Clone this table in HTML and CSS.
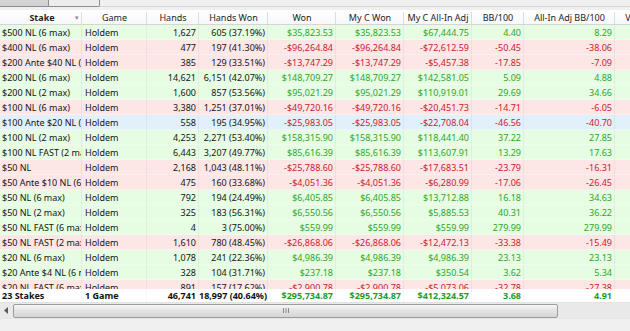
FILE: index.html
```html
<!DOCTYPE html>
<html>
<head>
<meta charset="utf-8">
<link rel="stylesheet" href="styles.css">
</head>
<body>
<div class="tabs">
  <div class="tab tab-stats">Stats</div>
  <div class="tab tab-adv">Advanced</div>
  <div class="tab-rest"></div>
</div>
<div class="grid">
  <div class="row head">
    <span class="stake-h"><b>Stake</b><i class="sort">&#9662;</i></span>
    <span>Game</span><span>Hands</span><span>Hands Won</span><span>Won</span><span>My C Won</span><span>My C All-In Adj</span><span>BB/100</span><span>All-In Adj BB/100</span><span>VPIP</span>
  </div>
  <div class="body">
    <div class="row g"><span class="l">$500 NL (6 max)</span><span class="l">Holdem</span><span>1,627</span><span>605 (37.19%)</span><span class="m">$35,823.53</span><span class="m">$35,823.53</span><span class="m">$67,444.75</span><span class="m">4.40</span><span class="m">8.29</span><span></span></div>
    <div class="row r"><span class="l">$400 NL (6 max)</span><span class="l">Holdem</span><span>477</span><span>197 (41.30%)</span><span class="m">-$96,264.84</span><span class="m">-$96,264.84</span><span class="m">-$72,612.59</span><span class="m">-50.45</span><span class="m">-38.06</span><span></span></div>
    <div class="row r"><span class="l">$200 Ante $40 NL (6 max)</span><span class="l">Holdem</span><span>385</span><span>129 (33.51%)</span><span class="m">-$13,747.29</span><span class="m">-$13,747.29</span><span class="m">-$5,457.38</span><span class="m">-17.85</span><span class="m">-7.09</span><span></span></div>
    <div class="row g"><span class="l">$200 NL (6 max)</span><span class="l">Holdem</span><span>14,621</span><span>6,151 (42.07%)</span><span class="m">$148,709.27</span><span class="m">$148,709.27</span><span class="m">$142,581.05</span><span class="m">5.09</span><span class="m">4.88</span><span></span></div>
    <div class="row g"><span class="l">$200 NL (2 max)</span><span class="l">Holdem</span><span>1,600</span><span>857 (53.56%)</span><span class="m">$95,021.29</span><span class="m">$95,021.29</span><span class="m">$110,919.01</span><span class="m">29.69</span><span class="m">34.66</span><span></span></div>
    <div class="row r"><span class="l">$100 NL (6 max)</span><span class="l">Holdem</span><span>3,380</span><span>1,251 (37.01%)</span><span class="m">-$49,720.16</span><span class="m">-$49,720.16</span><span class="m">-$20,451.73</span><span class="m">-14.71</span><span class="m">-6.05</span><span></span></div>
    <div class="row b"><span class="l">$100 Ante $20 NL (6 max)</span><span class="l">Holdem</span><span>558</span><span>195 (34.95%)</span><span class="m">-$25,983.05</span><span class="m">-$25,983.05</span><span class="m">-$22,708.04</span><span class="m">-46.56</span><span class="m">-40.70</span><span></span></div>
    <div class="row g"><span class="l">$100 NL (2 max)</span><span class="l">Holdem</span><span>4,253</span><span>2,271 (53.40%)</span><span class="m">$158,315.90</span><span class="m">$158,315.90</span><span class="m">$118,441.40</span><span class="m">37.22</span><span class="m">27.85</span><span></span></div>
    <div class="row g"><span class="l">$100 NL FAST (2 max)</span><span class="l">Holdem</span><span>6,443</span><span>3,207 (49.77%)</span><span class="m">$85,616.39</span><span class="m">$85,616.39</span><span class="m">$113,607.91</span><span class="m">13.29</span><span class="m">17.63</span><span></span></div>
    <div class="row r"><span class="l">$50 NL</span><span class="l">Holdem</span><span>2,168</span><span>1,043 (48.11%)</span><span class="m">-$25,788.60</span><span class="m">-$25,788.60</span><span class="m">-$17,683.51</span><span class="m">-23.79</span><span class="m">-16.31</span><span></span></div>
    <div class="row r"><span class="l">$50 Ante $10 NL (6 max)</span><span class="l">Holdem</span><span>475</span><span>160 (33.68%)</span><span class="m">-$4,051.36</span><span class="m">-$4,051.36</span><span class="m">-$6,280.99</span><span class="m">-17.06</span><span class="m">-26.45</span><span></span></div>
    <div class="row g"><span class="l">$50 NL (6 max)</span><span class="l">Holdem</span><span>792</span><span>194 (24.49%)</span><span class="m">$6,405.85</span><span class="m">$6,405.85</span><span class="m">$13,712.88</span><span class="m">16.18</span><span class="m">34.63</span><span></span></div>
    <div class="row g"><span class="l">$50 NL (2 max)</span><span class="l">Holdem</span><span>325</span><span>183 (56.31%)</span><span class="m">$6,550.56</span><span class="m">$6,550.56</span><span class="m">$5,885.53</span><span class="m">40.31</span><span class="m">36.22</span><span></span></div>
    <div class="row g"><span class="l">$50 NL FAST (6 max)</span><span class="l">Holdem</span><span>4</span><span>3 (75.00%)</span><span class="m">$559.99</span><span class="m">$559.99</span><span class="m">$559.99</span><span class="m">279.99</span><span class="m">279.99</span><span></span></div>
    <div class="row r"><span class="l">$50 NL FAST (2 max)</span><span class="l">Holdem</span><span>1,610</span><span>780 (48.45%)</span><span class="m">-$26,868.06</span><span class="m">-$26,868.06</span><span class="m">-$12,472.13</span><span class="m">-33.38</span><span class="m">-15.49</span><span></span></div>
    <div class="row g"><span class="l">$20 NL (6 max)</span><span class="l">Holdem</span><span>1,078</span><span>241 (22.36%)</span><span class="m">$4,986.39</span><span class="m">$4,986.39</span><span class="m">$4,986.39</span><span class="m">23.13</span><span class="m">23.13</span><span></span></div>
    <div class="row g"><span class="l">$20 Ante $4 NL (6 max)</span><span class="l">Holdem</span><span>328</span><span>104 (31.71%)</span><span class="m">$237.18</span><span class="m">$237.18</span><span class="m">$350.54</span><span class="m">3.62</span><span class="m">5.34</span><span></span></div>
    <div class="row r"><span class="l">$20 NL FAST (6 max)</span><span class="l">Holdem</span><span>891</span><span>157 (17.62%)</span><span class="m">-$2,900.78</span><span class="m">-$2,900.78</span><span class="m">-$5,073.06</span><span class="m">-32.78</span><span class="m">-27.38</span><span></span></div>
  </div>
  <div class="row total"><span class="l">23 Stakes</span><span class="l">1 Game</span><span>46,741</span><span class="hw">18,997 (40.64%)</span><span class="m">$295,734.87</span><span class="m">$295,734.87</span><span class="m">$412,324.57</span><span class="m">3.68</span><span class="m">4.91</span><span></span></div>
</div>
<div class="hscroll">
  <svg class="arrow" width="4" height="7" viewBox="0 0 4 7"><polygon points="4,0 0,3.5 4,7" fill="#5a5a5a"/></svg>
  <div class="thumb"><svg width="6" height="5" viewBox="0 0 6 5"><rect x="0" y="0" width="1" height="5" fill="#888"/><rect x="2.5" y="0" width="1" height="5" fill="#888"/><rect x="5" y="0" width="1" height="5" fill="#888"/></svg></div>
</div>
<div class="footer"></div>
</body>
</html>
```
FILE: styles.css
```css
* { box-sizing: border-box; }
html, body { margin: 0; padding: 0; }
body {
  width: 630px;
  height: 331px;
  overflow: hidden;
  background: #f0f0f0;
  font-family: "Noto Sans", "Liberation Sans", Arial, sans-serif;
  font-size: 9px;
  color: #151515;
}
.tabs {
  height: 7px;
  overflow: hidden;
  display: flex;
  align-items: flex-end;
}
.tab {
  flex: none;
  height: 20px;
  display: flex;
  align-items: flex-end;
  justify-content: center;
  padding-bottom: 4px;
  line-height: 12px;
  font-size: 9px;
  color: #222;
  border-right: 1px solid #8d8d8d;
  border-bottom: 1px solid #8d8d8d;
}
.tab-stats { width: 49px; background: linear-gradient(#e6e6e6, #cfcfcf); }
.tab-adv { width: 51px; background: #ececec; border-radius: 0 0 2px 0; }
.tab-rest { flex: 1; height: 1px; background: #d8d8d8; }

.grid {
  margin-top: 3px;
  width: 630px;
  overflow: hidden;
  background: #fff;
}
.row {
  display: grid;
  grid-template-columns: 82px 65px 52px 69px 68px 68px 68px 52px 91px 40px;
  width: 655px;
  height: 15px;
  line-height: 15px;
}
.row > span {
  display: block;
  white-space: nowrap;
  overflow: hidden;
  text-align: right;
  padding: 0 2px 0 3px;
  border-right: 1px solid rgba(0, 0, 0, 0.045);
}
.row > span.l { text-align: left; padding: 0 0 0 3px; }
.row > span:first-child { padding-left: 2px; }

.head {
  background: linear-gradient(#ffffff, #f7f8fa);
  border-bottom: 1px solid #d5d5d5;
  color: #1e1e1e;
}
.head > span {
  text-align: center;
  position: relative;
  border-right: none;
  padding: 0;
}
.head > span::after {
  content: "";
  position: absolute;
  right: 0;
  top: 2px;
  bottom: 0;
  width: 1px;
  background: #dadde2;
}
.stake-h b { font-weight: bold; }
.sort {
  position: absolute;
  right: 3px;
  top: 0;
  font-style: normal;
  font-size: 7px;
  color: #8a8a8a;
}

.body { height: 264px; overflow: hidden; }
.body .row { height: 15px; box-shadow: inset 0 -1px 0 rgba(255, 255, 255, 0.35); }
.g { background: #e6fce3; }
.r { background: #fde6e6; }
.b { background: #e1f0fb; }
.g .m { color: #2fa62a; }
.r .m, .b .m { color: #c8232d; }

.total {
  height: 13px;
  line-height: 13px;
  font-weight: bold;
  background: #fff;
  color: #111;
}
.total > span { border-right-color: rgba(0, 0, 0, 0.03); }
.total > span.hw { overflow: visible; padding-left: 0; }
.total .m { color: #1f9b1f; }

.hscroll {
  height: 16px;
  display: flex;
  align-items: center;
  background: #e9e9e9;
  border-top: 1px solid #e2e2e2;
}
.arrow { margin: 0 5px 0 4px; flex: none; }
.thumb {
  width: 545px;
  height: 14px;
  flex: none;
  border: 1px solid #9c9c9c;
  border-radius: 2px;
  background: linear-gradient(#f7f7f7, #e2e2e2 50%, #d6d6d6);
  display: flex;
  align-items: center;
  justify-content: center;
}
.footer {
  height: 13px;
  background: #f0f0f0;
  border-top: 1px solid #e6e6e6;
}
```
